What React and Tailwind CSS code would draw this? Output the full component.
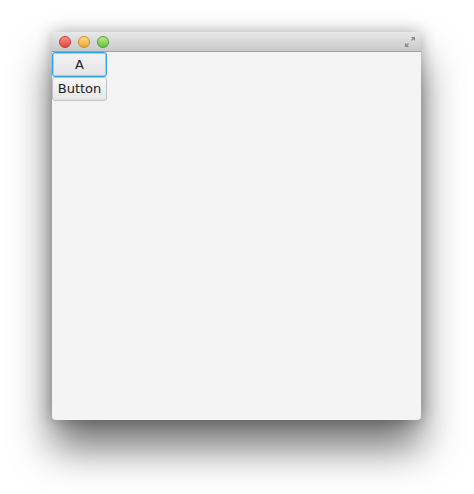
import React from 'react';

const TrafficLight = ({ from, to, border }) => (
    <span
        className={`block w-[12px] h-[12px] rounded-full border ${border} bg-gradient-to-b ${from} ${to}`}
    />
);

const App = () => {
    return (
        <div className="w-[474px] h-[494px] bg-white pt-[32px] pl-[52px] font-['Lucida_Grande','DejaVu_Sans',sans-serif]">
            {/* window */}
            <div className="w-[369px] h-[388px] flex flex-col rounded-[4px] bg-[#f4f4f4] shadow-[0_28px_40px_rgba(0,0,0,0.55),0_0_16px_rgba(0,0,0,0.3)]">
                {/* title bar */}
                <div className="h-[20px] flex items-center justify-between px-[7px] rounded-t-[4px] bg-gradient-to-b from-[#e8e8e8] to-[#c9c9c9] border-b border-[#a2a2a2]">
                    <div className="flex items-center gap-[7px]">
                        <TrafficLight from="from-[#ff8c84]" to="to-[#e0443c]" border="border-[#c33a33]" />
                        <TrafficLight from="from-[#ffd988]" to="to-[#e9a92a]" border="border-[#c98d1c]" />
                        <TrafficLight from="from-[#b9ec8a]" to="to-[#63c13d]" border="border-[#4d9f2e]" />
                    </div>
                    <svg width="12" height="12" viewBox="0 0 12 12" className="mr-[-2px]">
                        <path d="M7 1 L11 1 L11 5 Z" fill="#8a8a8a" />
                        <path d="M10 2 L7.5 4.5" stroke="#8a8a8a" strokeWidth="1.3" />
                        <path d="M1 7 L1 11 L5 11 Z" fill="#8a8a8a" />
                        <path d="M2 10 L4.5 7.5" stroke="#8a8a8a" strokeWidth="1.3" />
                    </svg>
                </div>

                {/* content */}
                <div className="flex flex-col items-start">
                    <button className="w-[55px] h-[25px] flex items-center justify-center text-[13px] text-[#222] rounded-[3px] border border-[#2ea3e0] bg-gradient-to-b from-[#f3f3f3] to-[#e4e4e4] shadow-[inset_0_0_0_1px_#9ad3f2]">
                        A
                    </button>
                    <button className="w-[55px] h-[24px] flex items-center justify-center text-[13px] text-[#222] rounded-[3px] border border-[#c2c2c2] bg-gradient-to-b from-[#f6f6f6] to-[#e6e6e6]">
                        Button
                    </button>
                </div>
            </div>
        </div>
    );
};

export default App;
